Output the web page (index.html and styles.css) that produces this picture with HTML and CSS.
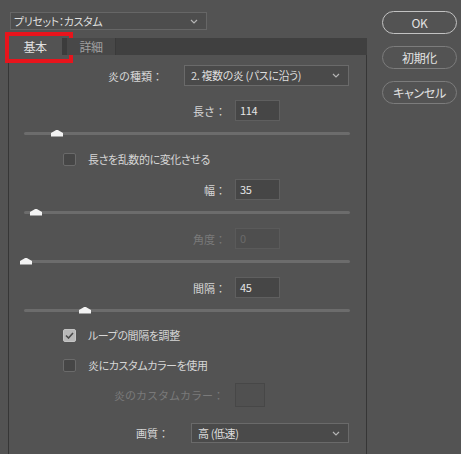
FILE: index.html
```html
<!DOCTYPE html>
<html lang="ja">
<head>
    <meta charset="UTF-8">
    <meta name="viewport" content="width=device-width, initial-scale=1.0">
    <title>炎</title>
    <link rel="stylesheet" href="styles.css">
</head>
<body>
    <div class="dialog">
        <div class="main">
            <div class="select preset">
                <span>プリセット：カスタム</span>
                <svg class="chev" width="8" height="5" viewBox="0 0 8 5"><polyline points="1,1 4,4 7,1"/></svg>
            </div>

            <div class="tabs">
                <div class="tab active">基本<span class="mark"></span></div>
                <div class="tab">詳細</div>
            </div>

            <div class="panel">
                <div class="row type-row">
                    <span class="label">炎の種類：</span>
                    <div class="select type-select">
                        <span>2. 複数の炎 (パスに沿う)</span>
                        <svg class="chev" width="8" height="5" viewBox="0 0 8 5"><polyline points="1,1 4,4 7,1"/></svg>
                    </div>
                </div>

                <div class="row num-row first">
                    <span class="label">長さ：</span>
                    <div class="num-box">114</div>
                </div>
                <div class="slider"><div class="track"><span class="thumb" style="left: 27px"></span></div></div>

                <div class="row check-row random">
                    <span class="check"></span>
                    <span>長さを乱数的に変化させる</span>
                </div>

                <div class="row num-row width-row">
                    <span class="label">幅：</span>
                    <div class="num-box">35</div>
                </div>
                <div class="slider"><div class="track"><span class="thumb" style="left: 6px"></span></div></div>

                <div class="row num-row disabled">
                    <span class="label">角度：</span>
                    <div class="num-box">0</div>
                </div>
                <div class="slider"><div class="track"><span class="thumb" style="left: -4px"></span></div></div>

                <div class="row num-row">
                    <span class="label">間隔：</span>
                    <div class="num-box">45</div>
                </div>
                <div class="slider"><div class="track"><span class="thumb" style="left: 55px"></span></div></div>

                <div class="row check-row loop">
                    <span class="check checked">
                        <svg width="9" height="7" viewBox="0 0 9 7"><polyline points="1,3.5 3.5,6 8,1"/></svg>
                    </span>
                    <span>ループの間隔を調整</span>
                </div>

                <div class="row check-row custom">
                    <span class="check"></span>
                    <span>炎にカスタムカラーを使用</span>
                </div>

                <div class="row swatch-row disabled">
                    <span class="label">炎のカスタムカラー：</span>
                    <div class="swatch"></div>
                </div>

                <div class="row quality-row">
                    <span class="label">画質：</span>
                    <div class="select quality-select">
                        <span>高 (低速)</span>
                        <svg class="chev" width="8" height="5" viewBox="0 0 8 5"><polyline points="1,1 4,4 7,1"/></svg>
                    </div>
                </div>
            </div>
        </div>

        <div class="side">
            <button class="btn default">OK</button>
            <button class="btn">初期化</button>
            <button class="btn">キャンセル</button>
        </div>
    </div>
</body>
</html>
```

FILE: styles.css
```css
html, body {
    height: 100%;
}
body {
    margin: 0;
    background-color: #535353;
    color: #d6d6d6;
    font-family: "Noto Sans CJK JP", "Noto Sans", sans-serif;
    font-size: 11px;
    letter-spacing: -0.4px;
    font-feature-settings: "palt";
    overflow: hidden;
}
.dialog {
    display: flex;
    height: 100%;
}
.main {
    width: 367px;
    display: flex;
    flex-direction: column;
}

/* dropdowns */
.select {
    display: flex;
    align-items: center;
    justify-content: space-between;
    box-sizing: border-box;
    background-color: #4a4a4a;
    border: 1px solid #6a6a6a;
    color: #dedede;
    line-height: 1;
    padding: 0 8px 0 6px;
}
.chev {
    fill: none;
    stroke: #b4b4b4;
    stroke-width: 1.2;
}
.preset {
    margin: 12px 0 0 10px;
    width: 197px;
    height: 18px;
    padding-left: 3px;
    background-color: #4d4d4d;
    border-color: #666;
}

/* tabs */
.tabs {
    display: flex;
    margin: 8px 0 0 8px;
    height: 17px;
    background-color: #404040;
}
.tab {
    position: relative;
    width: 48px;
    text-align: center;
    line-height: 17px;
    font-size: 12px;
    color: #a0a0a0;
    background-color: #484848;
    border-left: 5px solid #3c3c3c;
    border-right: 1px solid #3a3a3a;
}
.tab.active {
    width: 54px;
    color: #e2e2e2;
    background-color: #535353;
    border: none;
}
.mark {
    position: absolute;
    left: -3px;
    top: -6px;
    width: 60px;
    height: 23px;
    border: 4px solid #e8141c;
}

.panel {
    flex: 1;
    margin-left: 8px;
    border-left: 1px solid #363636;
    border-right: 1px solid #363636;
    padding-top: 10px;
}

.row {
    display: flex;
    align-items: center;
}
/* labels keep full-width colons, so the colon sits apart from the text */
.label {
    text-align: right;
    flex-shrink: 0;
    letter-spacing: 0;
    font-feature-settings: normal;
}
.disabled {
    color: #7a7a7a;
}

.type-select {
    width: 165px;
    height: 21px;
}
.type-row .label {
    width: 154px;
    margin-right: 21px;
}

.num-row {
    height: 21px;
    margin-top: 4px;
}
.num-row.first {
    margin-top: 14px;
}
.num-row.width-row {
    margin-top: 13px;
}
.num-row .label {
    width: 217px;
    margin-right: 9px;
}
.num-box {
    box-sizing: border-box;
    width: 45px;
    height: 21px;
    padding-left: 4px;
    line-height: 19px;
    background-color: #464646;
    border: 1px solid #5f5f5f;
    color: #e4e4e4;
}
.disabled .num-box {
    background-color: #4e4e4e;
    border-color: #5a5a5a;
    color: #6a6a6a;
}

/* sliders */
.slider {
    height: 24px;
    display: flex;
    align-items: center;
    padding-left: 15px;
}
.track {
    position: relative;
    width: 326px;
    height: 3px;
    border-radius: 2px;
    background-color: #6c6c6c;
}
.thumb {
    position: absolute;
    top: -2px;
    width: 12px;
    height: 7px;
    background-color: #f2f2f2;
    clip-path: polygon(50% 0, 100% 50%, 100% 100%, 0 100%, 0 50%);
}

/* checkboxes */
.check-row {
    height: 14px;
    padding-left: 54px;
}
.check-row.random {
    margin-top: 7px;
}
.check-row.loop {
    margin-top: 6px;
}
.check-row.custom {
    margin-top: 16px;
}
.check {
    box-sizing: border-box;
    width: 13px;
    height: 13px;
    margin-right: 12px;
    border: 1px solid #6a6a6a;
    border-radius: 2px;
    background-color: #464646;
    display: flex;
    align-items: center;
    justify-content: center;
}
.check.checked {
    background-color: #b8b8b8;
    border-color: #c4c4c4;
}
.check svg {
    fill: none;
    stroke: #4a4a4a;
    stroke-width: 1.6;
}

.swatch-row {
    margin-top: 11px;
}
.swatch-row .label {
    width: 215px;
    margin-right: 11px;
}
.swatch {
    box-sizing: border-box;
    width: 30px;
    height: 24px;
    border: 1px solid #474747;
    background-color: #505050;
}

.quality-row {
    margin-top: 16px;
}
.quality-row .label {
    width: 160px;
    margin-right: 22px;
}
.quality-select {
    width: 158px;
    height: 20px;
}

/* buttons */
.side {
    display: flex;
    flex-direction: column;
    gap: 12px;
    margin: 11px 0 0 15px;
}
.btn {
    width: 75px;
    height: 23px;
    padding: 0;
    border: 1px solid #7c7c7c;
    border-radius: 12px;
    background-color: #535353;
    color: #e2e2e2;
    font-family: inherit;
    font-size: 12px;
    letter-spacing: -0.3px;
    font-feature-settings: "palt";
}
.btn.default {
    border-color: #c2c2c2;
}
```
